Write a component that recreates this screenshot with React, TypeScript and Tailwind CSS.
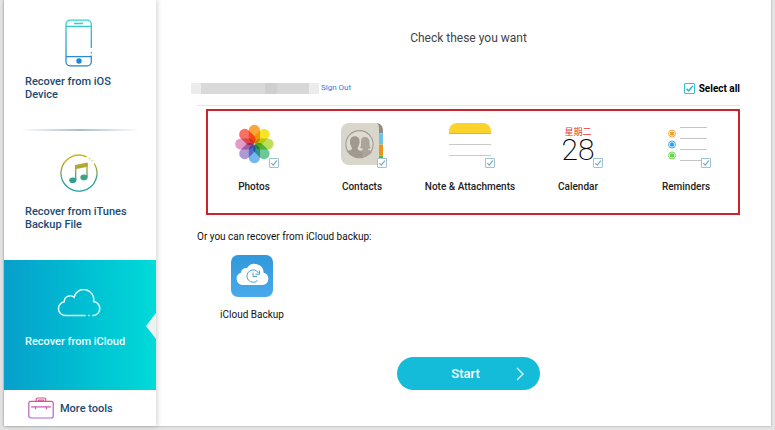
import { useState } from 'react';
import type { ReactNode } from 'react';

const PhoneIcon = () => (
  <svg viewBox="0 0 28 48" className="h-12 w-7" fill="none" stroke="url(#phone)" strokeWidth="1.3">
    <defs>
      <linearGradient id="phone" x1="0" y1="0" x2="0" y2="48" gradientUnits="userSpaceOnUse">
        <stop offset="0" stopColor="#2fd6cf" />
        <stop offset="1" stopColor="#2b7fc9" />
      </linearGradient>
    </defs>
    <path d="M26.3 29V5.2a4 4 0 0 0-4-4H5a4 4 0 0 0-4 4v37.6a4 4 0 0 0 4 4h17.3a4 4 0 0 0 4-4V36.5M26.3 33.2v1.4" />
    <path d="M1 7.4h25.3M9 4.5h9" />
    <path d="M1 37.6h25.3" stroke="#2b8bcf" />
    <circle cx="14" cy="42" r="2.7" fill="#1d86dc" stroke="none" />
  </svg>
);

const MusicIcon = () => (
  <svg viewBox="0 0 38 38" className="size-[38px]" fill="none" stroke="url(#music)" strokeWidth="1.3">
    <defs>
      <linearGradient id="music" x1="0" y1="0" x2="0" y2="38" gradientUnits="userSpaceOnUse">
        <stop offset="0" stopColor="#d6b31c" />
        <stop offset="0.3" stopColor="#b9a92c" />
        <stop offset="0.65" stopColor="#35a08c" />
        <stop offset="1" stopColor="#189da8" />
      </linearGradient>
    </defs>
    <path d="M26.8 2.9A18 18 0 1 0 34.2 9.5M29.4 4.5l.8.6M31.8 6.6l.6.6" />
    <path d="M15.7 12v14M27 9.5v13.5" />
    <path d="M15 11 27.7 8.4v4.4L15 15.2z" fill="#b3a82e" stroke="none" />
    <ellipse cx="12.8" cy="26.2" rx="3.6" ry="2.8" fill="#2fa092" stroke="none" />
    <ellipse cx="24" cy="23.4" rx="3.6" ry="2.8" fill="#3fa084" stroke="none" />
  </svg>
);

const CloudIcon = () => (
  <svg viewBox="0 0 44 28" className="h-7 w-11" fill="none" stroke="#e2fbff" strokeWidth="1.5" strokeLinecap="round">
    <path d="M28 26.5H8A6.9 6.9 0 0 1 7.3 12.8 5.8 5.8 0 0 1 17 8.300 9.900 9.900 0 0 1 36.500 12.600 7 7 0 0 1 36.700 26.500H35.800M31.600 26.500h.4" />
  </svg>
);

const ToolboxIcon = () => (
  <svg viewBox="0 0 26 22" className="h-[22px] w-[26px]" fill="none" stroke="url(#tools)" strokeWidth="1.2">
    <defs>
      <linearGradient id="tools" x1="0" y1="0" x2="0" y2="22" gradientUnits="userSpaceOnUse">
        <stop offset="0" stopColor="#d8508e" />
        <stop offset="1" stopColor="#a866e0" />
      </linearGradient>
    </defs>
    <rect x="0.8" y="4.4" width="24.4" height="16.6" rx="2" />
    <path d="M8.2 4.2V2.4A1.5 1.5 0 0 1 9.7 1h6.6a1.5 1.5 0 0 1 1.5 1.4v1.8M10.5 4v-.8h5V4" />
    <path d="M3.5 9.5v.4h19v-.4M7.5 10v2.3M18.5 10v2.3" />
  </svg>
);

const petals = [
  { angle: 0, color: '#f9a537' },
  { angle: 45, color: '#f7e426' },
  { angle: 90, color: '#bce05c' },
  { angle: 135, color: '#6cc896' },
  { angle: 180, color: '#74b6ee' },
  { angle: 225, color: '#b09ad6' },
  { angle: 270, color: '#e39bc8' },
  { angle: 315, color: '#f87064' },
];

const PhotosIcon = () => (
  <svg viewBox="0 0 42 42" className="isolate size-[42px]">
    {petals.map((petal) => (
      <rect
        key={petal.angle}
        x="15.8"
        y="1.8"
        width="11.2"
        height="18.6"
        rx="5.6"
        fill={petal.color}
        className="mix-blend-multiply"
        transform={`rotate(${petal.angle} 21.4 21)`}
      />
    ))}
  </svg>
);

const ContactsIcon = () => (
  <svg viewBox="0 0 42 42" className="size-[42px]">
    <path d="M36 0a7 7 0 0 1 6 7v3.5h-5z" fill="#8f8c84" />
    <path d="M37 10.5h5v11h-5z" fill="#6cc2ea" />
    <path d="M37 21.5h5v11h-5z" fill="#ed9417" />
    <path d="M37 32.5h5V35a7 7 0 0 1-5 7z" fill="#57b947" />
    <path d="M8 0h28q2 1.5 2 5v37H8a8 8 0 0 1-8-8V8a8 8 0 0 1 8-8z" fill="#d9d6cb" />
    <circle cx="18.5" cy="21.2" r="13.6" fill="#dedbd1" stroke="#a39d93" strokeWidth="1.1" />
    <path d="M24 14c3 0 4.5 2 4.5 5 0 3.5.3 5 1.3 6-1 .8-2.4.7-3 .8.4 1.6 3.4 1.9 4.4 3.2A14 14 0 0 1 20 34l-1-6c2-.6 3-1 3-2.200-1-.2-2-.4-3-1 1-1 1-3 1-5.800 0-3 1-5 4-5z" fill="#aaa49a" />
    <path d="M13.8 13.2c3.2 0 5 2.2 4.8 5.6 0 2.2-.8 3-1 4.2-.6 1.5-1 1.8-1 3 .4 1.6 5 1.800 5.200 5.200l-.3 2.700A13.500 13.500 0 0 1 6 28.500c1.400-1.200 4.600-1 5-2.700 0-1.200-.6-1.800-1-2.800-.4-1.200-1-2-1-4.200 0-3.400 1.600-5.600 4.800-5.600z" fill="#9f998f" />
  </svg>
);

const NotesIcon = () => (
  <svg viewBox="0 0 42 42" className="size-[42px]">
    <path d="M0 11V8a8 8 0 0 1 8-8h26a8 8 0 0 1 8 8v3z" fill="#fbd32c" />
    <path d="M0 10.5h42" stroke="#c9b468" strokeWidth="1" />
    <path d="M0 21.5h42M0 32.5h42" stroke="#c9c9c9" strokeWidth="1" />
  </svg>
);

const CalendarIcon = () => (
  <div className="flex h-[42px] w-[42px] flex-col items-center pt-1">
    <span className="font-['Noto_Sans_CJK_SC',sans-serif] text-[9px] leading-[10px] text-[#e8382f]">星期二</span>
    <span className="text-[30px] leading-[26px] font-extralight text-black">28</span>
  </div>
);

const reminderDots = [
  { y: 10.5, color: '#f5a12c' },
  { y: 21.5, color: '#2ea3ef' },
  { y: 32.5, color: '#63d640' },
];

const RemindersIcon = () => (
  <svg viewBox="0 0 42 42" className="size-[42px]">
    {reminderDots.map((dot) => (
      <g key={dot.color}>
        <circle cx="7" cy={dot.y} r="3.5" fill="none" stroke={dot.color} strokeWidth="0.9" />
        <circle cx="7" cy={dot.y} r="2.3" fill={dot.color} />
      </g>
    ))}
    <path d="M15 4.5h27M15 15.5h27M15 26.5h27M15 37.5h27" stroke="#c4c4c4" strokeWidth="1" />
  </svg>
);

const BackupIcon = () => (
  <svg viewBox="0 0 42 42" className="size-[42px]">
    <defs>
      <linearGradient id="backup" x1="0" y1="0" x2="0" y2="1">
        <stop offset="0" stopColor="#2f98db" />
        <stop offset="1" stopColor="#4aaaea" />
      </linearGradient>
    </defs>
    <rect width="42" height="42" rx="7" fill="url(#backup)" />
    <path d="M11.5 30A6.3 6.3 0 0 1 9.800 17.800 5.500 5.500 0 0 1 16 13 9 9 0 0 1 32.600 17.800 6.200 6.200 0 0 1 31.500 30z" fill="#fff" />
    <g fill="none" stroke="#4b9fd4" strokeWidth="1">
      <path d="M26.5 25.500A6.200 6.200 0 1 1 27.500 18M28.500 15.500V19.200H24.500" />
      <path d="M22 17.500V21.500H26" />
    </g>
  </svg>
);

type CheckProps = {
  label: string;
  checked: boolean;
  onChange: () => void;
  large?: boolean;
};

const Check = ({ label, checked, onChange, large }: CheckProps) => (
  <span className={large ? 'relative block size-[11px]' : 'relative block size-[10px]'}>
    <input
      type="checkbox"
      aria-label={label}
      checked={checked}
      onChange={onChange}
      className={`block size-full appearance-none rounded-[1px] border bg-white ${
        large ? 'border-[#35bfd0]' : 'border-[#9dc3d3]'
      }`}
    />
    {checked && (
      <svg
        viewBox="0 0 10 10"
        className={`pointer-events-none absolute inset-0 size-full ${large ? 'text-[#1fb4c8]' : 'text-[#77a8c4]'}`}
        fill="none"
        stroke="currentColor"
        strokeWidth="1.2"
      >
        <path d="M2.3 5.2 4.2 7.2 7.9 2.7" />
      </svg>
    )}
  </span>
);

const categories: { name: string; icon: ReactNode }[] = [
  { name: 'Photos', icon: <PhotosIcon /> },
  { name: 'Contacts', icon: <ContactsIcon /> },
  { name: 'Note & Attachments', icon: <NotesIcon /> },
  { name: 'Calendar', icon: <CalendarIcon /> },
  { name: 'Reminders', icon: <RemindersIcon /> },
];

const Sidebar = () => (
  <nav className="z-10 flex w-[152px] shrink-0 flex-col bg-white text-[11px] leading-[13px] font-medium text-[#1b4a72] shadow-[1px_0_5px_rgba(0,0,0,0.2)]">
    <a href="#ios" className="flex h-[129px] flex-col pt-[19px] pr-6 pl-[21px]">
      <span className="self-center"><PhoneIcon /></span>
      <span className="mt-2">Recover from iOS<br />Device</span>
    </a>
    <div className="mx-4 h-0.5 bg-linear-to-r from-transparent via-[#a9bfce] to-transparent" />
    <a href="#itunes" className="flex h-[129px] flex-col pt-[23px] pr-6 pl-[21px]">
      <span className="self-center"><MusicIcon /></span>
      <span className="mt-[13px]">Recover from iTunes<br />Backup File</span>
    </a>
    <a
      href="#icloud"
      className="relative flex h-[130px] flex-col bg-linear-to-r from-[#089fcb] to-[#00dbd8] pt-[29px] pr-6 pl-[21px] text-[#ecfdff]"
    >
      <span className="self-center"><CloudIcon /></span>
      <span className="mt-[18px]">Recover from iCloud</span>
      <svg viewBox="0 0 10 26" className="absolute top-[53px] right-0 h-[26px] w-2.5">
        <path d="M10 0v26L0 13z" fill="#eef1f2" />
      </svg>
    </a>
    <a href="#tools" className="flex flex-1 items-center gap-1.5 pl-6">
      <ToolboxIcon />
      <span>More tools</span>
    </a>
  </nav>
);

const App: React.FC = () => {
  const [selected, setSelected] = useState<string[]>(categories.map((c) => c.name));
  const allSelected = selected.length === categories.length;

  const toggle = (name: string) => {
    setSelected(selected.includes(name) ? selected.filter((n) => n !== name) : [...selected, name]);
  };

  return (
    <div className="flex min-h-screen bg-[#e4e4e4] px-1 pb-1 font-[Roboto,sans-serif]">
      <div className="flex flex-1 bg-white shadow-[0_0_2px_rgba(0,0,0,0.35)]">
        <Sidebar />
        <main className="flex-1 pr-[31px] pl-[41px]">
          <h1 className="pt-[30px] text-center text-[12px] leading-4 text-[#444]">Check these you want</h1>

          <div className="mt-[34px] -ml-1.5 flex h-4 items-center">
            <div className="flex h-[11px] w-[128px] bg-[#ececec] px-2.5">
              <div className="flex-1 bg-[#d9d9d9]" />
              <div className="w-3 bg-[#cfcfcf]" />
              <div className="w-8 bg-[#d7d7d7]" />
            </div>
            <a href="#signout" className="ml-0.5 text-[8px] leading-3 text-[#1d80e8]">Sign Out</a>
            <label className="ml-auto flex items-center gap-1 text-[10px] font-bold text-black">
              <Check
                label="Select all"
                large
                checked={allSelected}
                onChange={() => setSelected(allSelected ? [] : categories.map((c) => c.name))}
              />
              Select all
            </label>
          </div>
          <hr className="mt-[9px] border-[#e6e6e6]" />

          <div className="mt-[3px] ml-[9px] flex h-[106px] justify-between border-2 border-[#cf2229] pt-3 pr-1.5">
            {categories.map((category) => (
              <div key={category.name} className="flex w-[92px] flex-col items-center">
                <div className="relative">
                  {category.icon}
                  <div className="absolute -right-1 -bottom-[3px]">
                    <Check
                      label={category.name}
                      checked={selected.includes(category.name)}
                      onChange={() => toggle(category.name)}
                    />
                  </div>
                </div>
                <span className="mt-4 text-[10px] leading-3 font-medium whitespace-nowrap text-[#222]">
                  {category.name}
                </span>
              </div>
            ))}
          </div>

          <p className="mt-4 text-[10px] leading-3 text-[#111]">Or you can recover from iCloud backup:</p>
          <button type="button" className="mt-3 ml-[9px] flex w-[92px] flex-col items-center">
            <BackupIcon />
            <span className="mt-3 text-[10px] leading-3 text-[#111]">iCloud Backup</span>
          </button>

          <button
            type="button"
            className="mx-auto mt-9 grid h-[33px] w-[143px] grid-cols-[1fr_auto_1fr] items-center rounded-full bg-[#14bcd9] pr-1.5 text-[13px] font-medium text-white"
          >
            <span className="col-start-2">Start</span>
            <svg viewBox="0 0 8 14" className="mr-2.5 h-3.5 w-2 justify-self-end" fill="none" stroke="#e8fbff" strokeWidth="1.3">
              <path d="M1 1l6 6-6 6" />
            </svg>
          </button>
        </main>
      </div>
    </div>
  );
};

export default App;
